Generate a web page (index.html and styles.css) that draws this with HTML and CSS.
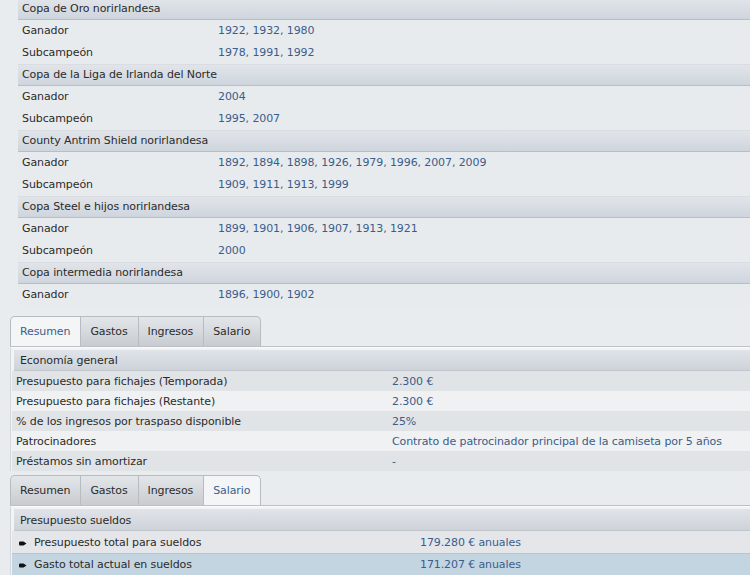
FILE: index.html
```html
<!DOCTYPE html>
<html lang="es">
<head>
  <meta charset="UTF-8">
  <title>Club - Palmarés y finanzas</title>
  <link rel="stylesheet" href="styles.css">
</head>
<body>
  <div class="honours">
    <div class="group">Copa de Oro norirlandesa</div>
    <div class="row"><span class="label">Ganador</span><span class="val">1922, 1932, 1980</span></div>
    <div class="row"><span class="label">Subcampeón</span><span class="val">1978, 1991, 1992</span></div>
    <div class="group">Copa de la Liga de Irlanda del Norte</div>
    <div class="row"><span class="label">Ganador</span><span class="val">2004</span></div>
    <div class="row"><span class="label">Subcampeón</span><span class="val">1995, 2007</span></div>
    <div class="group">County Antrim Shield norirlandesa</div>
    <div class="row"><span class="label">Ganador</span><span class="val">1892, 1894, 1898, 1926, 1979, 1996, 2007, 2009</span></div>
    <div class="row"><span class="label">Subcampeón</span><span class="val">1909, 1911, 1913, 1999</span></div>
    <div class="group">Copa Steel e hijos norirlandesa</div>
    <div class="row"><span class="label">Ganador</span><span class="val">1899, 1901, 1906, 1907, 1913, 1921</span></div>
    <div class="row"><span class="label">Subcampeón</span><span class="val">2000</span></div>
    <div class="group">Copa intermedia norirlandesa</div>
    <div class="row"><span class="label">Ganador</span><span class="val">1896, 1900, 1902</span></div>
  </div>

  <div class="tabbox">
    <div class="tabs">
      <span class="tab active">Resumen</span>
      <span class="tab">Gastos</span>
      <span class="tab">Ingresos</span>
      <span class="tab">Salario</span>
    </div>
    <div class="panel">
      <div class="head">Economía general</div>
      <div class="line"><span class="key">Presupuesto para fichajes (Temporada)</span><span class="val">2.300 €</span></div>
      <div class="line"><span class="key">Presupuesto para fichajes (Restante)</span><span class="val">2.300 €</span></div>
      <div class="line"><span class="key">% de los ingresos por traspaso disponible</span><span class="val">25%</span></div>
      <div class="line"><span class="key">Patrocinadores</span><span class="val">Contrato de patrocinador principal de la camiseta por 5 años</span></div>
      <div class="line"><span class="key">Préstamos sin amortizar</span><span class="val">-</span></div>
    </div>
  </div>

  <div class="tabbox">
    <div class="tabs">
      <span class="tab">Resumen</span>
      <span class="tab">Gastos</span>
      <span class="tab">Ingresos</span>
      <span class="tab active">Salario</span>
    </div>
    <div class="panel wages">
      <div class="head">Presupuesto sueldos</div>
      <div class="line wage">
        <span class="key"><svg class="bullet" width="8" height="7" viewBox="0 0 8 7"><path d="M1 1.5 H4.5 L7.5 3.5 L4.5 5.5 H1 Q0 5.5 0 4.5 V2.5 Q0 1.5 1 1.5 Z" fill="#111"/></svg>Presupuesto total para sueldos</span>
        <span class="val">179.280 € anuales</span>
      </div>
      <div class="line wage selected">
        <span class="key"><svg class="bullet" width="8" height="7" viewBox="0 0 8 7"><path d="M1 1.5 H4.5 L7.5 3.5 L4.5 5.5 H1 Q0 5.5 0 4.5 V2.5 Q0 1.5 1 1.5 Z" fill="#111"/></svg>Gasto total actual en sueldos</span>
        <span class="val">171.207 € anuales</span>
      </div>
    </div>
  </div>
</body>
</html>
```

FILE: styles.css
```css
body {
  margin: 0;
  background-color: #e9ecef;
  font-family: "DejaVu Sans", "Noto Sans", sans-serif;
  font-size: 11px;
  letter-spacing: -0.1px;
  color: #2b2b2b;
  overflow: hidden;
}
.val {
  color: #3a5d8a;
  white-space: nowrap;
}

/* palmarés */
.honours {
  margin: -2px 0 0 18px;
}
.group {
  height: 20px;
  line-height: 20px;
  padding-left: 4px;
  border-top: 1px solid #d9dde2;
  border-bottom: 1px solid #b9bec5;
  background: linear-gradient(#e1e5ea, #cfd5dd);
}
.honours .row {
  display: flex;
  height: 22px;
  line-height: 22px;
  padding-left: 4px;
  background-color: #e8ebee;
}
.honours .label {
  width: 196px;
  flex-shrink: 0;
}

/* pestañas */
.tabbox {
  margin: 10px 0 0 10px;
}
.tabbox + .tabbox {
  margin-top: 4px;
}
.tabs {
  display: flex;
  height: 30px;
  border-bottom: 1px solid #bcc0c5;
}
.tab {
  padding: 0 10px 0 9px;
  line-height: 29px;
  border-top: 1px solid #b7bcc1;
  border-right: 1px solid #b7bcc1;
  background: linear-gradient(#e3e6e9, #c8ccd1);
}
.tab:first-child {
  border-left: 1px solid #b7bcc1;
  border-top-left-radius: 5px;
}
.tab:last-child {
  border-top-right-radius: 5px;
}
.tab.active {
  background: #f4f5f7;
  color: #3b5f88;
}
.panel {
  border-top: 1px solid #fafbfc;
  border-left: 1px solid #d3d7db;
  padding-top: 2px;
  background-color: #f2f3f5;
}
.head {
  margin-left: 3px;
  height: 20px;
  line-height: 22px;
  padding-left: 6px;
  border-bottom: 1px solid #c1c6cc;
  background: linear-gradient(#e0e4e9, #ced3da);
}
.wages .head {
  height: 21px;
  line-height: 23px;
}
.line {
  display: flex;
  margin-left: 1px;
  height: 20px;
  line-height: 21px;
  padding-left: 4px;
  background-color: #e1e4e7;
}
.line:nth-child(odd) {
  background-color: #eff1f3;
}
.line .key {
  width: 376px;
  flex-shrink: 0;
}
.line.wage {
  height: 22px;
  line-height: 23px;
  padding-left: 7px;
  background-color: #e4e6e9;
}
.line.wage .key {
  width: 401px;
}
.line.selected {
  background-color: #c4d5e2;
  border-top: 1px solid #b3c5d3;
  height: 21px;
  line-height: 21px;
}
.bullet {
  margin-right: 7px;
  vertical-align: -1px;
}
```
